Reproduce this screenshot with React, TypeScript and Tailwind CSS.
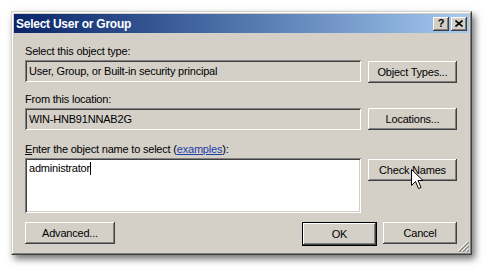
import React from "react";

const raised =
  "bg-[#d4d0c8] shadow-[inset_-1px_-1px_0_#404040,inset_1px_1px_0_#ffffff,inset_-2px_-2px_0_#808080]";
const sunken =
  "shadow-[inset_1px_1px_0_#808080,inset_-1px_-1px_0_#ffffff,inset_2px_2px_0_#404040,inset_-2px_-2px_0_#d4d0c8]";

function Btn({ label, className = "" }: { label: React.ReactNode; className?: string }) {
  return (
    <div
      className={`${raised} h-[22px] flex items-center justify-center text-[11px] text-black ${className}`}
    >
      {label}
    </div>
  );
}

function Field({ text }: { text: string }) {
  return (
    <div className={`${sunken} w-[336px] h-[22px] flex items-center pl-[4px] text-[11px] text-black`}>
      {text}
    </div>
  );
}

export default function App() {
  return (
    <div className="min-h-screen bg-white p-[11px] font-['Liberation_Sans',Arial,sans-serif] tracking-[-0.2px]">
      <div className="w-[461px] h-[244px] bg-[#d4d0c8] flex border border-t-[#d4d0c8] border-l-[#d4d0c8] border-r-[#404040] border-b-[#404040] shadow-[3px_4px_7px_rgba(0,0,0,0.55)]">
        <div className="relative flex-1 flex flex-col p-px border border-t-white border-l-white border-r-[#808080] border-b-[#808080]">
          {/* title bar */}
          <div className="h-[19px] flex items-center justify-between pl-[2px] pr-[2px] bg-gradient-to-r from-[#0a246a] to-[#a6caf0]">
            <span className="text-white font-bold text-[12px] tracking-[-0.25px]">Select User or Group</span>
            <div className="flex">
              <div className={`${raised} w-[16px] h-[14px] flex items-center justify-center text-[11px] font-bold leading-none`}>?</div>
              <div className={`${raised} ml-[2px] w-[16px] h-[14px] flex items-center justify-center`}>
                <svg width="8" height="7" viewBox="0 0 8 7">
                  <path d="M0.5 0.5 L7.5 6.5 M7.5 0.5 L0.5 6.5" stroke="#000" strokeWidth="1.6" />
                </svg>
              </div>
            </div>
          </div>

          {/* body */}
          <div className="flex-1 flex flex-col pl-[11px] pr-[12px] text-[11px] text-black">
            <div className="mt-[11px] h-[14px] leading-[14px]">Select this object type:</div>
            <div className="mt-[2px] flex items-start gap-[7px]">
              <Field text="User, Group, or Built-in security principal" />
              <Btn label="Object Types..." className="w-[89px] mt-px" />
            </div>

            <div className="mt-[9px] h-[14px] leading-[14px]">From this location:</div>
            <div className="mt-[2px] flex items-start gap-[7px]">
              <Field text="WIN-HNB91NNAB2G" />
              <Btn label="Locations..." className="w-[89px]" />
            </div>

            <div className="mt-[12px] h-[14px] leading-[14px]">
              <span className="underline">E</span>nter the object name to select (
              <span className="text-[#1c3fa8] underline">examples</span>):
            </div>
            <div className="mt-[2px] flex items-start gap-[7px]">
              <div className={`${sunken} bg-white w-[336px] h-[55px] pl-[4px] pt-[3px] flex items-start`}>
                <span className="leading-[14px]">administrator</span>
                <span className="w-px h-[13px] bg-black mt-px" />
              </div>
              <div className="relative mt-px">
                <Btn label="Check Names" className="w-[89px]" />
                <svg
                  className="absolute left-[43px] top-[10px]"
                  width="13"
                  height="21"
                  viewBox="0 0 13 21"
                >
                  <path
                    d="M0.5 0.5 L0.5 16.5 L4.5 12.5 L7.5 19.5 L10 18.5 L7 11.5 L12 11.5 Z"
                    fill="#fff"
                    stroke="#000"
                    strokeWidth="1"
                    strokeLinejoin="miter"
                  />
                </svg>
              </div>
            </div>

            <div className="mt-[9px] flex items-start">
              <Btn label="Advanced..." className="w-[90px]" />
              <div className="ml-auto flex gap-[6px]">
                <div className="border border-black">
                  <Btn label="OK" className="w-[73px] h-[20px]" />
                </div>
                <Btn label="Cancel" className="w-[74px]" />
              </div>
            </div>
          </div>

          {/* resize grip */}
          <svg className="absolute right-[1px] bottom-[1px]" width="12" height="12" viewBox="0 0 12 12">
            <path d="M11 1 L1 11 M11 5 L5 11 M11 9 L9 11" stroke="#ffffff" strokeWidth="1" />
            <path d="M12 2 L2 12 M12 6 L6 12 M12 10 L10 12" stroke="#808080" strokeWidth="1.2" />
          </svg>
        </div>
      </div>
    </div>
  );
}
